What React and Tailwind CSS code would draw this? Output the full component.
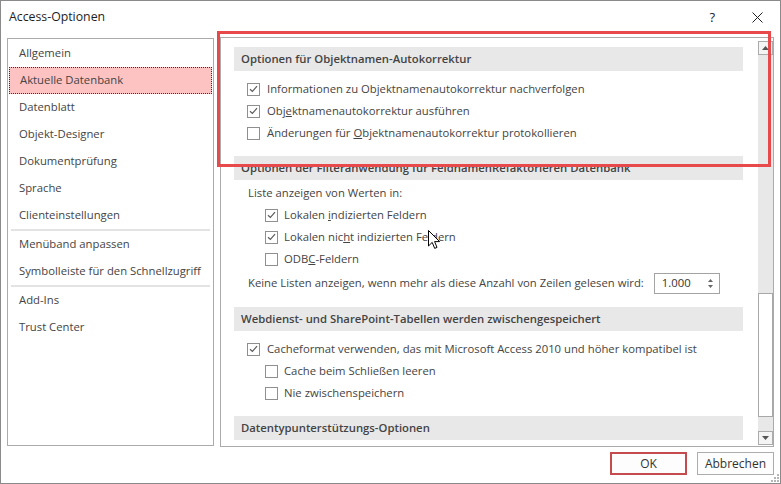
import React from "react";

function Check({ checked }) {
  return (
    <span className="w-[13px] h-[13px] border border-[#8f8f8f] bg-white flex items-center justify-center shrink-0">
      {checked && (
        <svg width="9" height="8" viewBox="0 0 9 8">
          <path d="M1 4.2 L3.4 6.5 L8 1.2" stroke="#5c5c5c" strokeWidth="1.2" fill="none" />
        </svg>
      )}
    </span>
  );
}

function Row({ checked, indent, children }) {
  return (
    <div className={`h-[22px] flex items-center ${indent ? "pl-[31px] gap-[6px]" : "pl-[13px] gap-[7px]"}`}>
      <Check checked={checked} />
      <span>{children}</span>
    </div>
  );
}

function Header({ children }) {
  return (
    <div className="w-[509px] h-[24px] bg-[#e8e8e8] flex items-center pl-[7px] font-semibold text-[#444]">
      {children}
    </div>
  );
}

export default function App() {
  const groups = [
    ["Allgemein", "Aktuelle Datenbank", "Datenblatt", "Objekt-Designer", "Dokumentprüfung", "Sprache", "Clienteinstellungen"],
    ["Menüband anpassen", "Symbolleiste für den Schnellzugriff"],
    ["Add-Ins", "Trust Center"],
  ];

  return (
    <div className="relative w-[781px] h-[484px] bg-white border border-[#8a8a8a] flex flex-col text-[11.3px] text-[#444] font-['Open_Sans',sans-serif] overflow-hidden">
      {/* Title bar */}
      <div className="h-[36px] flex items-start pt-[7px] pl-[8px] shrink-0">
        <span className="text-[12.3px] text-[#1e1e1e]">Access-Optionen</span>
        <div className="ml-auto flex items-center pr-[17px] pt-[3px]">
          <span className="text-[13px] text-[#222] leading-none">?</span>
          <svg className="ml-[37px]" width="11" height="11" viewBox="0 0 11 11">
            <path d="M0.5 0.5 L10.5 10.5 M10.5 0.5 L0.5 10.5" stroke="#222" strokeWidth="1" />
          </svg>
        </div>
      </div>

      {/* Body */}
      <div className="flex gap-[6px] pl-[6px]">
        {/* Nav */}
        <nav className="mt-[1px] w-[207px] h-[408px] border border-[#ababab] pt-[1px] flex flex-col">
          {groups.map((g, gi) => (
            <div key={gi} className="flex flex-col">
              {gi > 0 && <div className="mx-[3px] h-[2px] bg-[#e3e3e3]" />}
              {g.map((item) =>
                item === "Aktuelle Datenbank" ? (
                  <div key={item} className="h-[27px] mx-[1px] flex items-center pl-[10px] bg-[#fdc3c3] border border-dotted border-[#333]">
                    {item}
                  </div>
                ) : (
                  <div key={item} className="h-[27px] flex items-center pl-[11px]">
                    {item}
                  </div>
                )
              )}
            </div>
          ))}
        </nav>

        {/* Options panel */}
        <div className="w-[554px] h-[410px] border border-[#ababab] flex">
          <div className="flex-1 pl-[13px] pt-[9px]">
            <Header>Optionen für Objektnamen-Autokorrektur</Header>
            <div className="pt-[7px] pb-[12px]">
              <Row checked>Informationen zu Objektnamenautokorrektur nachverfolgen</Row>
              <Row checked>Obj<u>e</u>ktnamenautokorrektur ausführen</Row>
              <Row>Änderungen für <u>O</u>bjektnamenautokorrektur protokollieren</Row>
            </div>

            <Header>Optionen der Filteranwendung für FeldnamenRefaktorieren Datenbank</Header>
            <div className="pt-[2px] pb-[11px]">
              <div className="h-[22px] flex items-center pl-[14px]">Liste anzeigen von Werten in:</div>
              <Row checked indent>Lokalen <u>i</u>ndizierten Feldern</Row>
              <Row checked indent>Lokalen nic<u>h</u>t indizierten Feldern</Row>
              <Row indent>ODB<u>C</u>-Feldern</Row>
              <div className="h-[26px] flex items-center pl-[14px]">
                <span>Keine Listen anzeigen, wenn mehr als diese Anzahl von Zeilen gelesen wird:</span>
                <div className="ml-[10px] w-[66px] h-[21px] border border-[#a3a3a3] flex items-center pl-[7px] pr-[5px] text-[#333]">
                  <span>1.000</span>
                  <svg className="ml-auto" width="7" height="13" viewBox="0 0 7 13">
                    <path d="M3.5 2 L6 5 L1 5 Z" fill="#666" />
                    <path d="M1 8 L6 8 L3.5 11 Z" fill="#666" />
                  </svg>
                </div>
              </div>
            </div>

            <Header>Webdienst- und SharePoint-Tabellen werden zwischengespeichert</Header>
            <div className="pt-[7px] pb-[12px]">
              <Row checked>Cacheformat verwenden, das mit Microsoft Access 2010 und höher kompatibel ist</Row>
              <Row indent>Cache beim Schließen leeren</Row>
              <Row indent>Nie zwischenspeichern</Row>
            </div>

            <Header>Datentypunterstützungs-Optionen</Header>
          </div>

          {/* Scrollbar */}
          <div className="w-[15px] mt-[3px] mb-[1px] bg-[#e8e8e8] flex flex-col">
            <div className="h-[14px] border border-[#ababab] bg-[#f4f4f4] flex items-center justify-center">
              <svg width="7" height="4" viewBox="0 0 7 4"><path d="M3.5 0 L7 4 L0 4 Z" fill="#555" /></svg>
            </div>
            <div className="h-[238px]" />
            <div className="h-[124px] border border-[#a8a8a8] bg-white" />
            <div className="flex-1" />
            <div className="h-[14px] border border-[#ababab] bg-[#f4f4f4] flex items-center justify-center">
              <svg width="7" height="4" viewBox="0 0 7 4"><path d="M0 0 L7 0 L3.5 4 Z" fill="#555" /></svg>
            </div>
          </div>
        </div>
      </div>

      {/* Footer */}
      <div className="flex justify-end gap-[10px] pr-[6px] mt-[5px]">
        <button className="w-[77px] h-[23px] border-2 border-[#c64b4e] bg-[#fdfdfd] text-[12px] text-[#333]">OK</button>
        <button className="w-[77px] h-[23px] border border-[#adadad] bg-[#fdfdfd] text-[12px] text-[#333]">Abbrechen</button>
      </div>

      {/* Resize grip */}
      <svg className="absolute right-[1px] bottom-[1px]" width="8" height="8" viewBox="0 0 8 8">
        <g fill="#b5b5b5">
          <rect x="6" y="0" width="2" height="2" />
          <rect x="3" y="3" width="2" height="2" />
          <rect x="6" y="3" width="2" height="2" />
          <rect x="0" y="6" width="2" height="2" />
          <rect x="3" y="6" width="2" height="2" />
          <rect x="6" y="6" width="2" height="2" />
        </g>
      </svg>

      {/* Red annotation */}
      <div className="absolute left-[216px] top-[30px] w-[554px] h-[136px] border-[3px] border-[#e84a4b] pointer-events-none" />

      {/* Mouse cursor */}
      <svg className="absolute left-[427px] top-[229px]" width="13" height="20" viewBox="0 0 13 20">
        <path d="M0.5 0.5 L0.5 16 L4.2 12.4 L6.7 18.4 L9 17.4 L6.6 11.6 L11.6 11.6 Z" fill="#fff" stroke="#000" strokeWidth="1" />
      </svg>
    </div>
  );
}
